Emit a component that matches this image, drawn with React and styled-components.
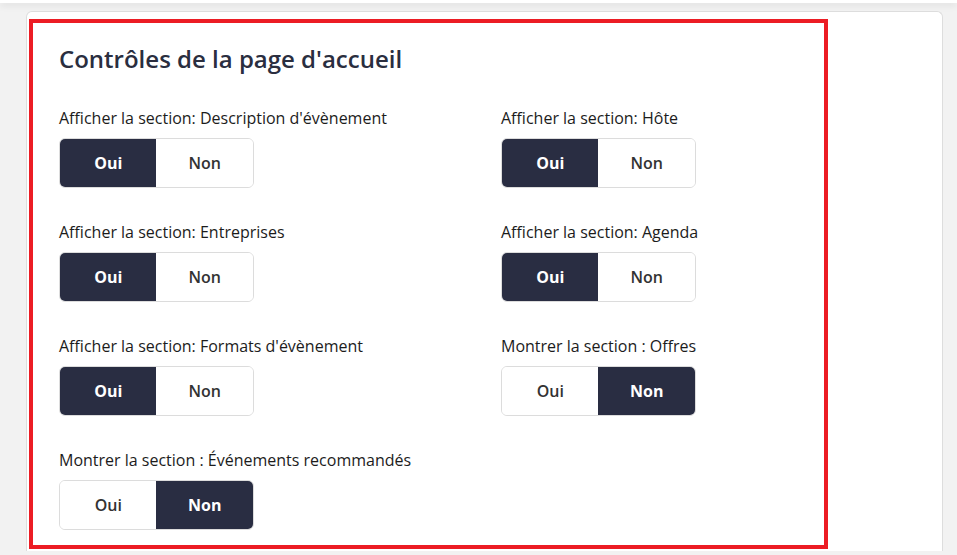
import React, { useState } from 'react'
import styled, { createGlobalStyle } from 'styled-components'

const GlobalStyle = createGlobalStyle`
  body {
    margin: 0;
    background-color: #f2f2f2;
    font-family: 'Open Sans', 'Noto Sans', sans-serif;
  }
`

const TopBar = styled.div`
  height: 3px;
  background-color: #ffffff;
  box-shadow: 0 2px 7px rgba(0, 0, 0, 0.13);
`

const Page = styled.div`
  padding: 8px 14px 0 26px;
`

const Card = styled.div`
  background-color: #ffffff;
  border: 1px solid #dddddd;
  border-bottom: none;
  border-radius: 6px 6px 0 0;
  padding: 7px 0 0 2px;
  height: 540px;
  box-sizing: border-box;
`

const Highlight = styled.section`
  width: 799px;
  border: 4px solid #ec1c24;
  box-sizing: border-box;
  padding: 21px 0 15px 26px;
`

const Title = styled.h2`
  margin: 0 0 33px;
  font-size: 24px;
  line-height: 30px;
  font-weight: 600;
  color: #2a2e3f;
`

const Grid = styled.div`
  display: grid;
  grid-template-columns: 442px auto;
  row-gap: 33px;
`

const Field = styled.div`
  display: flex;
  flex-direction: column;
  gap: 9px;
`

const Label = styled.label`
  font-size: 16px;
  line-height: 22px;
  color: #1c1c1c;
`

const Toggle = styled.div`
  display: flex;
  width: 195px;
  height: 50px;
  border: 1px solid #dcdcdc;
  border-radius: 6px;
  overflow: hidden;
  box-sizing: border-box;
`

const Option = styled.button`
  flex: 1;
  border: none;
  margin: -1px;
  font-family: inherit;
  font-size: 16px;
  font-weight: ${p => (p.$active ? 700 : 600)};
  color: ${p => (p.$active ? '#ffffff' : '#333333')};
  background-color: ${p => (p.$active ? '#292d42' : '#ffffff')};
  cursor: pointer;
`

const sections = [
  { id: 'desc', label: "Afficher la section: Description d'évènement", on: true },
  { id: 'host', label: 'Afficher la section: Hôte', on: true },
  { id: 'companies', label: 'Afficher la section: Entreprises', on: true },
  { id: 'agenda', label: 'Afficher la section: Agenda', on: true },
  { id: 'formats', label: "Afficher la section: Formats d'évènement", on: true },
  { id: 'offers', label: 'Montrer la section : Offres', on: false },
  { id: 'recommended', label: 'Montrer la section : Événements recommandés', on: false },
]

const YesNo = ({ value, onChange }) => (
  <Toggle>
    <Option $active={value} onClick={() => onChange(true)}>Oui</Option>
    <Option $active={!value} onClick={() => onChange(false)}>Non</Option>
  </Toggle>
)

export default () => {
  const [values, setValues] = useState(
    Object.fromEntries(sections.map(({ id, on }) => [id, on]))
  )

  return (
    <>
      <GlobalStyle />
      <TopBar />
      <Page>
        <Card>
          <Highlight>
            <Title>Contrôles de la page d'accueil</Title>
            <Grid>
              {
                sections.map(({ id, label }) => (
                  <Field key={id}>
                    <Label>{label}</Label>
                    <YesNo
                      value={values[id]}
                      onChange={v => setValues({ ...values, [id]: v })}
                    />
                  </Field>
                ))
              }
            </Grid>
          </Highlight>
        </Card>
      </Page>
    </>
  )
}
